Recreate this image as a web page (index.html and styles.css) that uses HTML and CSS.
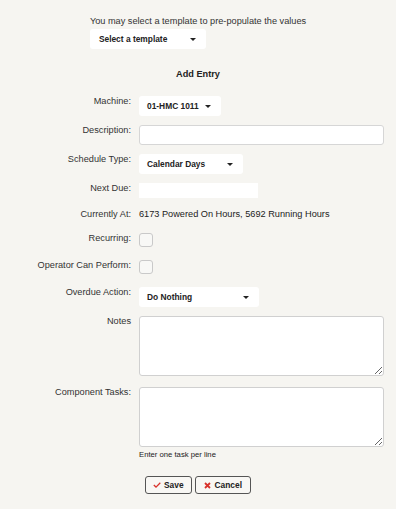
FILE: index.html
```html
<!DOCTYPE html>
<html lang="en">
<head>
  <meta charset="UTF-8" />
  <meta name="viewport" content="width=device-width, initial-scale=1.0"/>
  <title>Add Entry</title>
  <link rel="stylesheet" href="styles.css">
</head>
<body>

  <div class="template-pick">
    <p class="intro">You may select a template to pre-populate the values</p>
    <div class="dropdown dropdown-template">Select a template <span class="caret"></span></div>
  </div>

  <h3 class="form-title">Add Entry</h3>

  <div class="entry-form">
    <div class="row">
      <label class="row-label">Machine:</label>
      <div class="dropdown">01-HMC 1011 <span class="caret"></span></div>
    </div>

    <div class="row">
      <label class="row-label" for="description">Description:</label>
      <input type="text" id="description" class="text-input" />
    </div>

    <div class="row">
      <label class="row-label">Schedule Type:</label>
      <div class="dropdown dropdown-schedule">Calendar Days <span class="caret"></span></div>
    </div>

    <div class="row">
      <label class="row-label" for="nextDue">Next Due:</label>
      <input type="text" id="nextDue" class="plain-input" />
    </div>

    <div class="row row-text">
      <label class="row-label">Currently At:</label>
      <span class="value">6173 Powered On Hours, 5692 Running Hours</span>
    </div>

    <div class="row row-check">
      <label class="row-label" for="recurring">Recurring:</label>
      <input type="checkbox" id="recurring" class="check" />
    </div>

    <div class="row row-check">
      <label class="row-label" for="operator">Operator Can Perform:</label>
      <input type="checkbox" id="operator" class="check" />
    </div>

    <div class="row">
      <label class="row-label">Overdue Action:</label>
      <div class="dropdown dropdown-overdue">Do Nothing <span class="caret"></span></div>
    </div>

    <div class="row">
      <label class="row-label" for="notes">Notes</label>
      <textarea id="notes" class="text-area"></textarea>
    </div>

    <div class="row">
      <label class="row-label" for="tasks">Component Tasks:</label>
      <div class="field">
        <textarea id="tasks" class="text-area"></textarea>
        <p class="hint">Enter one task per line</p>
      </div>
    </div>
  </div>

  <div class="actions">
    <button class="btn">
      <svg width="8" height="6" viewBox="0 0 8 6"><path d="M0.8 3.1 L3 5.1 L7.3 0.8" fill="none" stroke="#d8322b" stroke-width="1.3"/></svg>
      Save
    </button>
    <button class="btn btn-cancel">
      <svg width="7" height="7" viewBox="0 0 7 7"><path d="M1 1 L6 6 M6 1 L1 6" fill="none" stroke="#d8322b" stroke-width="1.8"/></svg>
      Cancel
    </button>
  </div>

</body>
</html>
```

FILE: styles.css
```css
body {
  font-family: "Liberation Sans", Arial, sans-serif;
  font-size: 9.2px;
  line-height: 11px;
  color: #333;
  margin: 0;
  padding: 0;
  text-align: center;
  background-color: #f6f5f1;
}

.template-pick {
  display: inline-block;
  text-align: left;
  margin-top: 16px;
}

.intro {
  margin: 0 0 2px;
}

.dropdown {
  display: flex;
  align-items: center;
  justify-content: space-between;
  gap: 6px;
  height: 20px;
  padding: 0 10px 0 8px;
  box-sizing: border-box;
  background-color: #fff;
  border-radius: 3px;
  font-size: 8.4px;
  font-weight: bold;
  color: #222;
}

.dropdown-template {
  width: 116px;
  padding-left: 9px;
}

.dropdown-schedule {
  width: 104px;
}

.dropdown-overdue {
  width: 120px;
}

.caret {
  width: 0;
  height: 0;
  border-top: 3px solid #222;
  border-left: 3px solid transparent;
  border-right: 3px solid transparent;
}

.form-title {
  margin: 20px 0 16px;
  font-size: 9.2px;
  line-height: 11px;
  color: #222;
}

.entry-form {
  display: flex;
  flex-direction: column;
  gap: 9px;
  text-align: left;
}

.row {
  display: flex;
  align-items: flex-start;
  gap: 8px;
}

.row-label {
  width: 131px;
  flex-shrink: 0;
  text-align: right;
}

.row-text {
  padding: 2px 0 4px;
}

.row-check {
  padding-bottom: 4px;
}

.value {
  color: #222;
}

.text-input {
  width: 245px;
  height: 20px;
  margin: 0;
  padding: 0 4px;
  box-sizing: border-box;
  border: 1px solid #d6d6d6;
  border-radius: 3px;
  background-color: #fff;
}

.plain-input {
  width: 119px;
  height: 15px;
  margin: 0;
  padding: 0 4px;
  box-sizing: border-box;
  border: none;
  background-color: #fff;
}

.check {
  appearance: none;
  width: 14px;
  height: 14px;
  margin: 0;
  border: 1px solid #c9c9c9;
  border-radius: 3px;
  background-color: #f8f8f6;
}

.text-area {
  display: block;
  width: 245px;
  height: 60px;
  margin: 0 0 2px;
  box-sizing: border-box;
  border: 1px solid #d0d0d0;
  border-radius: 3px;
  background-color: #fff;
}

.hint {
  margin: 3px 0 0;
  font-size: 7.7px;
  line-height: 9px;
  color: #222;
}

.actions {
  display: flex;
  justify-content: center;
  gap: 3px;
  margin-top: 17px;
}

.btn {
  display: inline-flex;
  align-items: center;
  gap: 3px;
  height: 18px;
  padding: 0 7px;
  border: 1px solid #555;
  border-radius: 3px;
  background-color: #f8f7f4;
  font-family: "Liberation Sans", Arial, sans-serif;
  font-size: 8.4px;
  font-weight: bold;
  color: #222;
  cursor: pointer;
}

.btn-cancel {
  padding: 0 8px;
  gap: 4px;
}
```
